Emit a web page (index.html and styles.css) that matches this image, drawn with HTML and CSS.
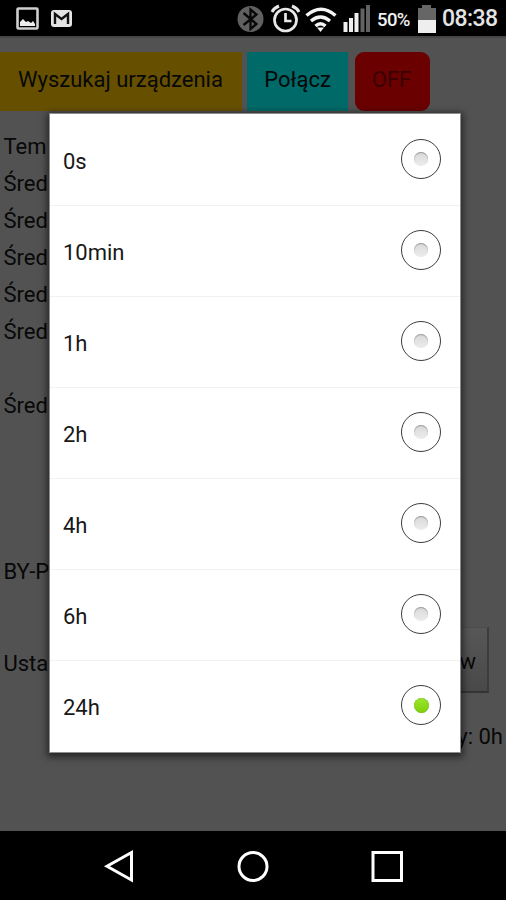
FILE: index.html
```
<!DOCTYPE html>
<html lang="pl">
<head>
<meta charset="utf-8">
<title>Ustawienia</title>
<link rel="stylesheet" href="styles.css">
</head>
<body>
<div class="phone">
  <header class="status">
    <svg class="status-left" width="80" height="36" viewBox="0 0 80 36">
      <rect x="17.500" y="8.500" width="20" height="20" rx="1" fill="none" stroke="#cfcfcf" stroke-width="2.600"/>
      <path d="M20 26v-4l3-3 3 3 2-1 3 2 2-2 2 3v2z" fill="#eee"/>
      <rect x="51" y="10" width="21" height="17" rx="3" fill="#e4e4e4"/>
      <path d="M55 24V14l6.500 5 6.500-5v10" fill="none" stroke="#111" stroke-width="2.400"/>
    </svg>
    <svg class="status-icons" width="143" height="36" viewBox="230 0 143 36">
      <circle cx="250.500" cy="19" r="13" fill="#606060"/>
      <path d="M243.500 13l13 11-6 5V9.500l6 5-13 10.500" fill="none" stroke="#080808" stroke-width="2.300"/>
      <g fill="none" stroke="#e8e8e8" stroke-width="2.700">
        <circle cx="285.500" cy="20" r="11"/>
        <path d="M285.500 13v8h6"/>
        <path d="M272 12q2-4 7-6M299 12q-2-4-7-6" stroke-width="3"/>
      </g>
      <g fill="none" stroke="#f4f4f4" stroke-width="3.400">
        <path d="M306.500 15.500q14.500-12.500 29 0M311 21q9.500-8 19 0M315.500 26q5-4.500 10 0"/>
      </g>
      <path d="M317 27.500h7l-3.500 4.500z" fill="#f4f4f4"/>
      <path d="M343.500 22h4v10h-4zM349 18h4v14h-4zM354.500 13h4v19h-4z" fill="#eee"/>
      <path d="M360.500 8.500h4V32h-4zM366 5h4v27h-4z" fill="#626262"/>
    </svg>
    <span class="percent">50%</span>
    <svg class="battery" width="18" height="28" viewBox="0 0 18 28">
      <path d="M4 0h9v3h5v13H0V3h4z" fill="#666"/>
      <path d="M0 15h18v13H0z" fill="#eee"/>
    </svg>
    <span class="clock">08:38</span>
  </header>

  <main class="screen">
    <div class="buttons">
      <div class="btn search"><span>Wyszukaj urządzenia</span></div>
      <div class="btn connect"><span>Połącz</span></div>
      <div class="btn off"><span>OFF</span></div>
    </div>
    <div class="readings">
      <p>Tem</p>
      <p>Śred</p>
      <p>Śred</p>
      <p>Śred</p>
      <p>Śred</p>
      <p>Śred</p>
      <p class="spaced">Śred</p>
    </div>
    <p class="bypass">BY-P</p>
    <div class="setting"><span>Usta</span><span class="choose">w</span></div>
    <p class="total">y: 0h</p>

    <ul class="dialog">
      <li><span>0s</span><i class="radio"></i></li>
      <li><span>10min</span><i class="radio"></i></li>
      <li><span>1h</span><i class="radio"></i></li>
      <li><span>2h</span><i class="radio"></i></li>
      <li><span>4h</span><i class="radio"></i></li>
      <li><span>6h</span><i class="radio"></i></li>
      <li><span>24h</span><i class="radio checked"></i></li>
    </ul>
  </main>

  <nav class="nav">
    <svg width="506" height="69" viewBox="0 831 506 69" fill="none" stroke="#fff" stroke-width="3">
      <path d="M131.500 852.500v27.500L107 866.300z"/>
      <circle cx="253" cy="866.500" r="14"/>
      <rect x="373" y="852.500" width="28.500" height="28"/>
    </svg>
  </nav>
</div>
</body>
</html>
```
FILE: styles.css
```
* { box-sizing: border-box; }
body { margin: 0; background: #000; }
p, ul { margin: 0; padding: 0; }
.phone {
  width: 506px;
  height: 900px;
  display: flex;
  flex-direction: column;
  overflow: hidden;
  font-family: Roboto, sans-serif;
  font-size: 22px;
  color: #080808;
}
.status {
  height: 36px;
  flex: none;
  display: flex;
  align-items: center;
  background: #000;
  color: #f0f0f0;
}
.status-icons { margin-left: 150px; }
.percent { width: 35px; margin-left: 4px; margin-top: 3px; font-size: 18.500px; letter-spacing: -.6px; font-weight: 500; }
.battery { margin-left: 6px; margin-top: 1px; }
.clock { margin-left: 6px; margin-top: 1px; font-size: 23px; letter-spacing: -.6px; font-weight: 500; color: #e4e4e4; }
.screen {
  position: relative;
  height: 795px;
  flex: none;
  padding-top: 16px;
  background: #525252;
  border-top: 2px solid #454545;
}
.buttons { display: flex; margin-top: -2px; height: 59px; }
.btn { display: flex; justify-content: center; padding-top: 14px; line-height: 28px; }
.search { width: 242px; background: #665000; padding-right: 1px; }
.connect { width: 101px; margin-left: 5px; background: #006a68; }
.off { width: 75px; margin-left: 7px; padding-right: 2px; background: #6a0000; border-radius: 9px; color: #3b0000; }
.readings { padding: 17px 0 0 3.500px; }
.readings p { height: 37px; line-height: 37px; }
.readings .spaced { margin-top: 37px; }
.bypass { height: 37px; line-height: 37px; padding-left: 3.500px; margin-top: 129px; }
.setting { display: flex; justify-content: space-between; height: 66px; margin-top: 37px; padding: 0 17px 0 3.500px; line-height: 73px; }
.choose {
  width: 100px;
  padding-right: 11px;
  text-align: right;
  line-height: 68px;
  background: linear-gradient(#575757, #494949);
  border: solid #4b4b4b;
  border-width: 1px 2px 2px 1px;
  border-bottom-color: #343434;
  border-right-color: #3c3c3c;
}
.total { padding-right: 3px; margin-top: 25px; line-height: 37px; text-align: right; }
.dialog {
  position: absolute;
  left: 49px;
  top: 75px;
  width: 412px;
  height: 640px;
  list-style: none;
  background: #fff;
  border: 1px solid #8c8c8c;
  box-shadow: 0 2px 7px 2px rgba(0, 0, 0, .55);
  color: #181818;
}
.dialog li {
  display: flex;
  align-items: center;
  justify-content: space-between;
  height: 91px;
  padding: 2px 19px 0 13px;
  border-bottom: 1px solid #f2f2f2;
}
.dialog li:first-child { height: 92px; padding-top: 4px; }
.dialog li:last-child { border-bottom: 0; }
.radio {
  width: 40px;
  height: 40px;
  margin-top: -5px;
  border: 1.500px solid #3c3c3c;
  border-radius: 50%;
  display: flex;
  align-items: center;
  justify-content: center;
}
.radio::after {
  content: "";
  width: 14px;
  height: 14px;
  border-radius: 50%;
  background: linear-gradient(#d9d9d9, #ececec);
  box-shadow: inset 0 1px 1px #999;
}
.radio.checked::after {
  width: 15px;
  height: 15px;
  background: linear-gradient(#9be62c, #80d00c);
  box-shadow: inset 0 0 1px #5b8d14;
}
.nav { height: 69px; background: #000; }
.nav svg { display: block; }
```
